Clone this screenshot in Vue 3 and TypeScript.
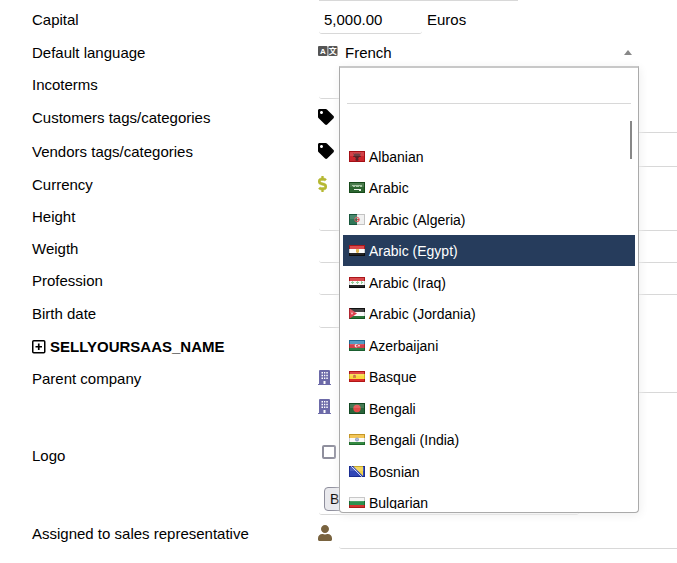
<script setup lang="ts">
import { ref } from 'vue'

interface Shape {
  tag: 'rect' | 'circle' | 'path'
  attrs: Record<string, string | number>
}
interface Language {
  name: string
  flag: Shape[]
}

const band = (y: number, height: number, fill: string): Shape => ({
  tag: 'rect',
  attrs: { x: 0, y, width: 16, height, fill },
})
const pole = (x: number, width: number, fill: string): Shape => ({
  tag: 'rect',
  attrs: { x, y: 0, width, height: 11, fill },
})
const disc = (cx: number, cy: number, r: number, fill: string): Shape => ({
  tag: 'circle',
  attrs: { cx, cy, r, fill },
})
const fillPath = (d: string, fill: string): Shape => ({ tag: 'path', attrs: { d, fill } })
const linePath = (d: string, stroke: string): Shape => ({
  tag: 'path',
  attrs: { d, stroke, fill: 'none', 'stroke-width': 1 },
})

const languages: Language[] = [
  {
    name: 'Albanian',
    flag: [
      pole(0, 16, '#c8141c'),
      fillPath('M4 2l2 1 1-1 1 1 1-1 1 1 2-1-1 2 1 2-2 0-1 2 1 1-2 1-2-1 1-1-1-2-2 0 1-2z', '#4a1216'),
    ],
  },
  {
    name: 'Arabic',
    flag: [
      pole(0, 16, '#1c5a20'),
      linePath('M3 3.5h10M4 4.5h2m1 0h3m1 0h2', '#94ba90'),
      linePath('M5 7.5h7M10 8.5h2', '#e8f0e6'),
    ],
  },
  {
    name: 'Arabic (Algeria)',
    flag: [
      pole(0, 8, '#1f6b4a'),
      pole(8, 8, '#eeeeee'),
      { tag: 'circle', attrs: { cx: 8, cy: 5.5, r: 2.3, fill: 'none', stroke: '#d8434a' } },
      disc(9, 5.5, 1, '#d8232c'),
    ],
  },
  {
    name: 'Arabic (Egypt)',
    flag: [band(0, 4, '#d01c20'), band(4, 4, '#fafafa'), band(8, 3, '#111111'), fillPath('M7 4h3v3l-1 1H8L7 7z', '#e0b040')],
  },
  {
    name: 'Arabic (Iraq)',
    flag: [band(0, 4, '#d01c20'), band(4, 4, '#fafafa'), band(8, 3, '#111111'), linePath('M2 5.5h3M7 5.5h3M12 5.5h2M3.5 4v3M8.5 4v3M12.5 4v3', '#8ac890')],
  },
  {
    name: 'Arabic (Jordania)',
    flag: [band(0, 4, '#151515'), band(4, 4, '#fafafa'), band(8, 3, '#176a28'), fillPath('M0 0l8 5.5L0 11z', '#d8303c'), disc(3, 5.5, 1, '#f4b4b8')],
  },
  {
    name: 'Azerbaijani',
    flag: [band(0, 4, '#2a82b4'), band(4, 4, '#d0303c'), band(8, 3, '#20743a'), disc(7.3, 5.7, 1.7, '#f4dede'), disc(8, 5.7, 1, '#d0303c'), disc(10, 5.7, 0.9, '#f8e4e4')],
  },
  {
    name: 'Basque',
    flag: [band(0, 3, '#d81c1c'), band(3, 5, '#f8d830'), band(8, 3, '#d81c1c'), fillPath('M4 4h3v3H4z', '#d08030'), disc(5.5, 4.5, 0.8, '#b84030')],
  },
  {
    name: 'Bengali',
    flag: [pole(0, 16, '#17582a'), disc(8, 5.5, 3.7, '#e03a38')],
  },
  {
    name: 'Bengali (India)',
    flag: [band(0, 4, '#f0b830'), band(4, 4, '#fafafa'), band(8, 3, '#248034'), disc(8, 5.5, 2, '#8898c0'), disc(8, 5.5, 0.7, '#c8d0e4')],
  },
  {
    name: 'Bosnian',
    flag: [pole(0, 16, '#2038b0'), fillPath('M4 0h10v10z', '#f0cc38'), linePath('M2 0l11 11', '#d4dcf4')],
  },
  {
    name: 'Bulgarian',
    flag: [band(0, 4, '#f4f4f4'), band(4, 4, '#1c8840'), band(8, 3, '#d02420')],
  },
]

const capital = ref('5,000.00')
const language = ref('French')
const highlighted = ref('Arabic (Egypt)')
const open = ref(true)
const search = ref('')

function choose(name: string) {
  language.value = name
  open.value = false
}

const tagPath =
  'M0 252.118V48C0 21.49 21.49 0 48 0h204.118a48 48 0 0 1 33.941 14.059l211.882 211.882c18.745 18.745 18.745 49.137 0 67.882L293.823 497.941c-18.745 18.745-49.137 18.745-67.882 0L14.059 286.059A48 48 0 0 1 0 252.118zM112 64c-26.51 0-48 21.49-48 48s21.49 48 48 48 48-21.49 48-48-21.49-48-48-48z'
const dollarPath =
  'M209.2 233.4l-108-31.6C88.7 198.2 80 186.5 80 173.5c0-16.3 13.2-29.5 29.5-29.5h66.3c12.2 0 24.2 3.7 34.2 10.5 6.1 4.1 14.3 3.1 19.5-2l34.8-34c7.1-6.9 6.1-18.4-1.8-24.5C238 74.8 207.4 64.1 176 64V16c0-8.8-7.2-16-16-16h-32c-8.8 0-16 7.2-16 16v48h-2.5C45.8 64-5.4 118.7.5 183.6c4.2 46.1 39.4 83.6 83.8 96.6l102.5 30c12.5 3.7 21.2 15.3 21.2 28.3 0 16.3-13.2 29.5-29.5 29.5h-66.3C100 368 88 364.3 78 357.5c-6.1-4.1-14.3-3.1-19.5 2l-34.8 34c-7.1 6.9-6.1 18.4 1.8 24.5 24.5 19.2 55.1 29.9 86.5 30v48c0 8.8 7.2 16 16 16h32c8.8 0 16-7.2 16-16v-48.2c46.6-.9 90.3-28.6 105.7-72.7 21.5-61.6-14.6-124.8-72.5-141.7z'
const userPath =
  'M224 256c70.7 0 128-57.3 128-128S294.7 0 224 0 96 57.3 96 128s57.3 128 128 128zm89.6 32h-16.7c-22.2 10.2-46.9 16-72.9 16s-50.6-5.8-72.9-16h-16.7C60.2 288 0 348.2 0 422.4V464c0 26.5 21.5 48 48 48h352c26.5 0 48-21.5 48-48v-41.6c0-74.2-60.2-134.4-134.4-134.4z'
const buildingPath =
  'M0 14h1V1q0-1 1-1h9q1 0 1 1v13h1v1H0zM3.5 2v1.5h1.5V2zM6 2v1.5h1.3V2zM8.3 2v1.5h1.5V2zM3.5 4.8v1.5h1.5V4.8zM6 4.8v1.5h1.3V4.8zM8.3 4.8v1.5h1.5V4.8zM3.5 7.6v1.5h1.5V7.6zM6 7.6v1.5h1.3V7.6zM8.3 7.6v1.5h1.5V7.6zM5.5 11v3h2v-3z'
</script>

<template>
  <form class="form" @submit.prevent>
    <div class="previous"><span class="previous-field"></span></div>

    <div class="row">
      <label class="label" for="capital">Capital</label>
      <div class="field">
        <input id="capital" v-model="capital" class="input short" type="text" />
        <span class="unit">Euros</span>
      </div>
    </div>

    <div class="row tall">
      <label class="label" for="language">Default language</label>
      <div class="field language">
        <span class="icon">
          <svg width="20" height="10" viewBox="0 0 20 10" aria-hidden="true">
            <rect x="0" y="0" width="9.5" height="10" rx="1" fill="#555" />
            <rect x="10.3" y="0" width="9.2" height="10" rx="1" fill="#555" />
            <text x="4.8" y="8" class="glyph">A</text>
            <text x="14.8" y="8" class="glyph">文</text>
          </svg>
        </span>
        <div class="select">
          <button id="language" class="selection" type="button" :aria-expanded="open" @click="open = !open">
            <span>{{ language }}</span>
            <svg width="8" height="5" viewBox="0 0 8 5" aria-hidden="true"><path d="M0 5l4-5 4 5z" fill="#888" /></svg>
          </button>
          <div v-if="open" class="dropdown">
            <input v-model="search" class="search" type="search" aria-label="Search a language" />
            <ul class="options" role="listbox" aria-label="Languages">
              <li class="option" role="option"></li>
              <li
                v-for="item in languages"
                :key="item.name"
                class="option"
                :class="{ highlighted: item.name === highlighted }"
                role="option"
                :aria-selected="item.name === highlighted"
                @mouseenter="highlighted = item.name"
                @click="choose(item.name)"
              >
                <svg width="16" height="11" viewBox="0 0 16 11" aria-hidden="true">
                  <component :is="shape.tag" v-for="(shape, i) in item.flag" :key="i" v-bind="shape.attrs" />
                  <rect x="1" y="1" width="14" height="4" fill="#fff" fill-opacity="0.2" />
                  <rect x="1" y="5" width="14" height="5" fill="#fff" fill-opacity="0.08" />
                  <rect x="0.5" y="0.5" width="15" height="10" fill="none" stroke="#000" stroke-opacity="0.18" />
                </svg>
                <span>{{ item.name }}</span>
              </li>
            </ul>
            <span class="thumb"></span>
          </div>
        </div>
      </div>
    </div>

    <div class="row">
      <label class="label" for="incoterms">Incoterms</label>
      <div class="field"><input id="incoterms" class="input short" type="text" /></div>
    </div>

    <div class="row taller">
      <label class="label" for="customer-tags">Customers tags/categories</label>
      <div class="field">
        <span class="icon"><svg width="16" height="16" viewBox="0 0 512 512" aria-hidden="true"><path :d="tagPath" fill="#000" /></svg></span>
        <input id="customer-tags" class="input linked" type="text" />
      </div>
    </div>

    <div class="row taller">
      <label class="label" for="vendor-tags">Vendors tags/categories</label>
      <div class="field">
        <span class="icon"><svg width="16" height="16" viewBox="0 0 512 512" aria-hidden="true"><path :d="tagPath" fill="#000" /></svg></span>
        <input id="vendor-tags" class="input linked" type="text" />
      </div>
    </div>

    <div class="row">
      <label class="label" for="currency">Currency</label>
      <div class="field">
        <span class="icon"><svg width="9" height="16" viewBox="0 0 288 512" aria-hidden="true"><path :d="dollarPath" fill="#b6b832" stroke="#b6b832" stroke-width="14" /></svg></span>
        <input id="currency" class="input linked short" type="text" />
      </div>
    </div>

    <div class="row">
      <label class="label" for="height">Height</label>
      <div class="field"><input id="height" class="input" type="text" /></div>
    </div>
    <div class="row">
      <label class="label" for="weight">Weigth</label>
      <div class="field"><input id="weight" class="input" type="text" /></div>
    </div>
    <div class="row">
      <label class="label" for="profession">Profession</label>
      <div class="field"><input id="profession" class="input" type="text" /></div>
    </div>
    <div class="row tall">
      <label class="label" for="birth">Birth date</label>
      <div class="field"><input id="birth" class="input short" type="text" /></div>
    </div>

    <div class="row tall">
      <button class="label section" type="button">
        <svg width="14" height="14" viewBox="0 0 14 14" fill="none" stroke="#000" aria-hidden="true">
          <rect x="0.75" y="0.75" width="12" height="12" rx="1" stroke-width="1.5" />
          <path d="M6.75 3.5v6.5M3.5 6.75h6.5" stroke-width="1.7" />
        </svg>
        <span>SELLYOURSAAS_NAME</span>
      </button>
    </div>

    <div class="row">
      <label class="label" for="parent">Parent company</label>
      <div class="field">
        <span class="icon"><svg width="13" height="15" viewBox="0 0 13 15" aria-hidden="true"><path :d="buildingPath" fill="#6c6aa8" fill-rule="evenodd" /></svg></span>
        <input id="parent" class="input linked" type="text" />
      </div>
    </div>

    <div class="row">
      <label class="label" for="logo">Logo</label>
      <div class="field stack">
        <span class="icon"><svg width="13" height="15" viewBox="0 0 13 15" aria-hidden="true"><path :d="buildingPath" fill="#6c6aa8" fill-rule="evenodd" /></svg></span>
        <input class="check" type="checkbox" aria-label="Square logo" />
        <div class="file"><button id="logo" class="browse" type="button">Browse…</button></div>
      </div>
    </div>

    <div class="row taller">
      <label class="label" for="sales">Assigned to sales representative</label>
      <div class="field">
        <span class="icon"><svg width="14" height="16" viewBox="0 0 448 512" aria-hidden="true"><path :d="userPath" fill="#79633f" /></svg></span>
        <input id="sales" class="input linked" type="text" />
      </div>
    </div>
  </form>
</template>

<style>
body {
  background: #fff;
}
</style>

<style scoped>
* {
  box-sizing: border-box;
}
.form {
  color: #000;
  font-family: 'Liberation Sans', Arial, sans-serif;
  font-size: 15px;
  line-height: 18px;
  overflow-x: clip;
}
input,
button {
  font: inherit;
  color: inherit;
}
.previous {
  height: 4px;
  padding-left: 319px;
}
.previous-field {
  display: block;
  max-width: 199px;
  height: 1px;
  background: #d8d8d8;
}
.row {
  display: grid;
  grid-template-columns: 318px minmax(0, 1fr);
  align-items: center;
  min-height: 32px;
}
.row.tall {
  min-height: 33px;
}
.row.taller {
  min-height: 34px;
}
.label {
  padding-left: 32px;
}
.section {
  display: flex;
  align-items: center;
  gap: 4px;
  border: 0;
  padding-top: 0;
  padding-bottom: 0;
  padding-right: 0;
  background: none;
  font-weight: bold;
}
.field {
  display: flex;
  align-items: center;
  align-self: stretch;
}
.icon {
  flex: none;
  display: flex;
  width: 22px;
  padding-bottom: 3px;
}
.glyph {
  fill: #fff;
  font-family: 'Liberation Sans', 'Noto Sans CJK SC', sans-serif;
  font-size: 8px;
  font-weight: bold;
  text-anchor: middle;
}
.input {
  flex: 1;
  min-width: 0;
  align-self: stretch;
  margin: 0 -4px 2px 1px;
  border: 0 solid #d8d8d8;
  border-bottom-width: 1px;
  border-radius: 3px;
  padding: 2px 5px 0;
  background: transparent;
  outline: none;
}
.input.linked {
  margin-left: -1px;
}
.input.short {
  flex: none;
  width: 103px;
  margin-right: 0;
}
#currency {
  border-color: transparent;
}
.unit {
  padding-left: 5px;
}
.select {
  position: relative;
  align-self: stretch;
  flex: 0 1 300px;
  margin-left: -1px;
}
.selection {
  display: flex;
  align-items: center;
  justify-content: space-between;
  width: 100%;
  height: 100%;
  border: 0;
  padding: 0 7px 0 6px;
  background: none;
}
.dropdown {
  position: absolute;
  z-index: 2;
  top: 30px;
  left: 0;
  right: 0;
  display: flex;
  flex-direction: column;
  border: 1px solid #aaa;
  border-top: 2px solid #c8c8c8;
  border-radius: 0 0 4px 4px;
  padding: 3px;
  background: #fff;
  box-shadow: 1px 2px 10px #eee;
}
.search {
  appearance: none;
  height: 33px;
  margin: 0 4px 5px;
  border: 0;
  border-bottom: 1px solid #d8d8d8;
  padding: 0 4px;
  background: none;
  outline: none;
}
.options {
  height: 400px;
  margin: 0;
  padding: 0;
  overflow-y: auto;
  scrollbar-width: none;
  list-style: none;
  font-size: 14px;
}
.option {
  display: flex;
  align-items: center;
  gap: 4px;
  height: 31px;
  padding: 0 6px;
}
.option:nth-child(even) {
  margin-top: 1px;
}
.option.highlighted {
  background: #263c5c;
  color: #fff;
}
.thumb {
  position: absolute;
  top: 53px;
  right: 6px;
  width: 2px;
  height: 38px;
  background: #888;
}
.field.stack {
  flex-direction: column;
  align-items: flex-start;
  padding: 4px 0 2px 0;
}
.check {
  appearance: none;
  width: 14px;
  height: 14px;
  margin: 28px 0 28px 4px;
  border: 2px solid #8f8f9d;
  border-radius: 2px;
  background: #fff;
}
.file {
  width: 260px;
  max-width: 100%;
  margin-left: 1px;
  border-bottom: 1px solid #d8d8d8;
  border-radius: 3px;
  padding: 0 5px 3px;
}
.browse {
  display: block;
  height: 24px;
  border: 1px solid #8f8f9d;
  border-radius: 4px;
  padding: 0 5px;
  background: #e9e9ed;
  font-size: 14px;
}
</style>
